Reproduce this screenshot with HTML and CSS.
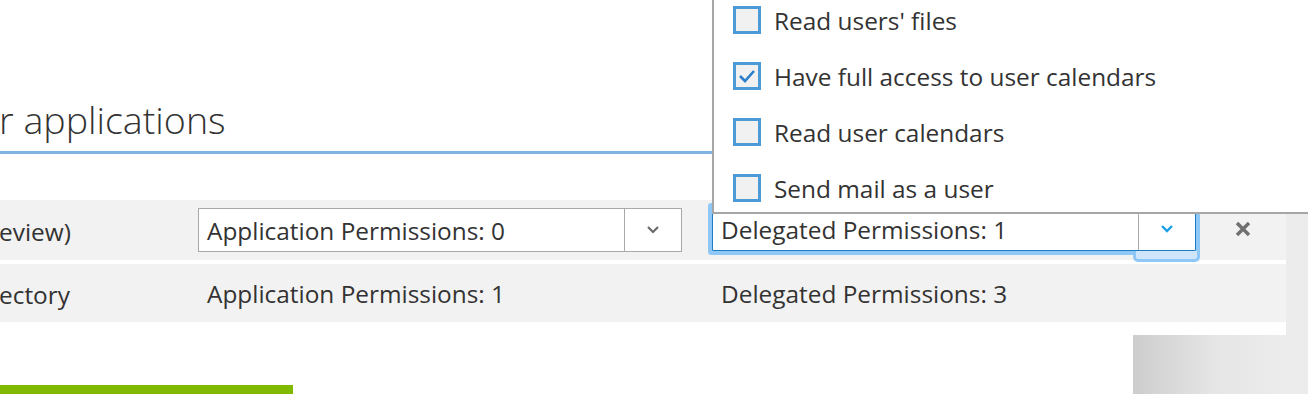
FILE: index.html
```html
<!DOCTYPE html>
<html lang="en">
<head>
    <meta charset="UTF-8">
    <title>Required permissions</title>
    <link rel="stylesheet" href="styles.css">
</head>
<body>
    <div class="page">
        <div class="main">
            <div class="title-bar">
                <h1>r applications</h1>
            </div>
            <div class="perm-table">
                <div class="perm-row">
                    <div class="app-name">eview)</div>
                    <div class="perm-cell">
                        <div class="select">
                            <span class="select-text">Application Permissions: 0</span>
                            <span class="select-btn">
                                <svg width="14" height="9" viewBox="0 0 14 9"><path d="M2 2l5 5 5-5" fill="none" stroke="#6b6b6b" stroke-width="2.2"/></svg>
                            </span>
                        </div>
                    </div>
                    <div class="perm-cell">
                        <div class="select focused">
                            <span class="select-text">Delegated Permissions: 1</span>
                            <span class="select-btn">
                                <svg width="14" height="9" viewBox="0 0 14 9"><path d="M2 2l5 5 5-5" fill="none" stroke="#1aa0e8" stroke-width="2.4"/></svg>
                            </span>
                        </div>
                    </div>
                    <div class="remove">
                        <svg width="18" height="18" viewBox="0 0 18 18"><path d="M3 3l12 12M15 3L3 15" stroke="#707070" stroke-width="3.4"/></svg>
                    </div>
                </div>
                <div class="perm-row">
                    <div class="app-name">ectory</div>
                    <div class="perm-cell"><span class="plain">Application Permissions: 1</span></div>
                    <div class="perm-cell"><span class="plain">Delegated Permissions: 3</span></div>
                    <div class="remove"></div>
                </div>
            </div>
            <div class="footer">
                <div class="save-bar"></div>
                <div class="shade"></div>
            </div>
        </div>
        <div class="side"></div>

        <div class="menu">
            <label class="menu-item"><span class="check"></span>Read users' files</label>
            <label class="menu-item"><span class="check checked"><svg width="18" height="14" viewBox="0 0 18 14"><path d="M2 7l5 5 9-10" fill="none" stroke="#2a7fcb" stroke-width="2.6"/></svg></span>Have full access to user calendars</label>
            <label class="menu-item"><span class="check"></span>Read user calendars</label>
            <label class="menu-item"><span class="check"></span>Send mail as a user</label>
        </div>
    </div>
</body>
</html>
```

FILE: styles.css
```css
html, body {
    margin: 0;
    padding: 0;
    background: #fff;
}
body {
    font-family: "Open Sans", "Noto Sans", Arial, sans-serif;
    color: #333;
    width: 1308px;
    height: 394px;
    overflow: hidden;
}
.page {
    position: relative;
    display: flex;
    height: 394px;
}
.main {
    width: 1286px;
    flex: none;
}
.side {
    flex: 1;
    margin-top: 200px;
    background: #ececec;
}
.title-bar {
    height: 151px;
    border-bottom: 3px solid #80b4df;
    box-sizing: content-box;
}
.title-bar h1 {
    margin: 0;
    padding-top: 97px;
    margin-left: -1px;
    font-size: 37.6px;
    font-weight: 300;
    line-height: 46px;
    color: #333;
}
.perm-table {
    margin-top: 46px;
}
.perm-row {
    display: grid;
    grid-template-columns: 198px 514px 486px 1fr;
    align-items: center;
    background: #f2f2f2;
    height: 60px;
    font-size: 24.4px;
}
.perm-row + .perm-row {
    margin-top: 4px;
    height: 58px;
}
.app-name {
    margin-left: -1px;
    padding-top: 2px;
}
.plain {
    padding-left: 9px;
}
.select {
    display: flex;
    height: 42px;
    border: 1px solid #a9a9a9;
    background: #fff;
    width: 482px;
    margin-top: -1px;
}
.select-text {
    flex: 1;
    padding-left: 8px;
    line-height: 44px;
}
.select-btn {
    width: 56px;
    border-left: 1px solid #a9a9a9;
    display: flex;
    align-items: center;
    justify-content: center;
}
.select.focused {
    border-color: #1e7dc2;
    box-shadow: 0 0 0 4px #8fc8f6;
    border-radius: 1px;
    margin-top: -3px;
}
.select.focused .select-btn {
    position: relative;
}
.select.focused .select-btn::after {
    content: "";
    position: absolute;
    left: -6px;
    right: -5px;
    top: 100%;
    height: 8px;
    margin-top: 1px;
    background: #cfe5f9;
    border: 3px solid #8fc8f6;
    border-top: none;
    border-radius: 0 0 5px 5px;
}
.remove {
    display: flex;
    justify-content: center;
    padding-left: 2px;
    margin-top: -2px;
}
.footer {
    display: flex;
    justify-content: space-between;
    align-items: flex-end;
    margin-top: 13px;
    height: 59px;
}
.save-bar {
    width: 293px;
    height: 9px;
    background: #7fba00;
}
.shade {
    width: 153px;
    height: 59px;
    background: linear-gradient(to right, #cdcdcd, #e6e6e6 55%, #ececec);
}
.menu {
    position: absolute;
    left: 712px;
    right: 0;
    top: -12px;
    height: 226px;
    box-sizing: border-box;
    padding-top: 8px;
    background: #fff;
    border-left: 2px solid #a6a6a6;
    border-bottom: 2px solid #a6a6a6;
    display: flex;
    flex-direction: column;
    gap: 8px;
}
.menu-item {
    display: flex;
    align-items: center;
    height: 48px;
    padding-left: 19px;
    font-size: 24.4px;
    color: #333;
}
.check {
    width: 22px;
    height: 22px;
    border: 3px solid #4c9ad6;
    background: #f1f1f1;
    margin-right: 13px;
    display: flex;
    align-items: center;
    justify-content: center;
}
```
